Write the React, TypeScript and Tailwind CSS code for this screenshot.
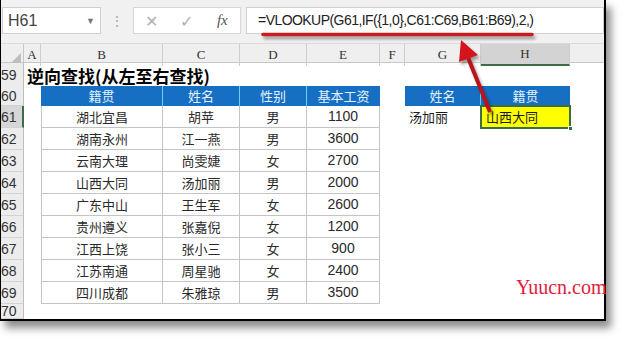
import { ReactNode } from "react";

const cjk = "font-['Noto_Sans_CJK_SC',sans-serif]";
const num = "font-['Liberation_Sans',sans-serif]";
const cols = "grid grid-cols-[23px_17px_122px_77px_67px_73px_25px_76px_89px_1fr]";

const rows = [
  ["湖北宜昌", "胡苹", "男", "1100"],
  ["湖南永州", "江一燕", "男", "3600"],
  ["云南大理", "尚雯婕", "女", "2700"],
  ["山西大同", "汤加丽", "男", "2000"],
  ["广东中山", "王生军", "女", "2600"],
  ["贵州遵义", "张嘉倪", "女", "1200"],
  ["江西上饶", "张小三", "女", "900"],
  ["江苏南通", "周星驰", "女", "2400"],
  ["四川成都", "朱雅琼", "男", "3500"],
];

function RowHead({ n, active }: { n: number; active?: boolean }) {
  return (
    <div
      className={`flex items-center ${num} text-[14px] text-[#333] leading-none border-b border-[#d2d2d2] ${
        active ? "bg-[#d6d6d6] border-r-2 border-r-[#3b6e47]" : "bg-[#ececec] border-r border-r-[#bdbdbd]"
      }`}
    >
      {n}
    </div>
  );
}

function Row({ n, h, active, children }: { n: number; h: string; active?: boolean; children?: ReactNode }) {
  return (
    <div className={`${cols} ${h}`}>
      <RowHead n={n} active={active} />
      {children}
    </div>
  );
}

function Head({ children, last }: { children: ReactNode; last?: boolean }) {
  return (
    <div
      className={`flex items-center justify-center bg-[#166fc2] text-[#e4f1ff] text-[13px] ${cjk} ${
        last ? "" : "border-r border-[#74cdf2]"
      }`}
    >
      {children}
    </div>
  );
}

function Cell({ children, first, digits }: { children: ReactNode; first?: boolean; digits?: boolean }) {
  return (
    <div
      className={`flex items-center justify-center border-r border-b border-[#c4c4c4] text-[#2a2a2a] ${
        first ? "border-l" : ""
      } ${digits ? `${num} text-[14px]` : `${cjk} text-[13px]`}`}
    >
      {children}
    </div>
  );
}

export default function App() {
  const letters = ["A", "B", "C", "D", "E", "F", "G", "H"];
  return (
    <div className="relative w-[627px] h-[342px] bg-white overflow-hidden">
      <div className="relative flex flex-col w-[606px] h-[321px] bg-white border-l border-r-2 border-b-2 border-black shadow-[5px_7px_8px_rgba(0,0,0,0.45)] overflow-hidden">
        {/* formula bar */}
        <div className="flex h-[44px] shrink-0 bg-[#f1f1f1] pt-[7px] pl-[1px] border-b border-[#dadada]">
          <div className="relative flex items-center w-[99px] h-[27px] bg-white border border-[#cfcfcf] pl-[5px]">
            <span className={`${num} text-[16px] text-[#444]`}>H61</span>
            <span className="ml-auto mr-[5px] text-[9px] text-[#777]">▼</span>
          </div>
          <div className="flex items-center justify-center w-[32px] h-[27px] text-[#aaa] text-[14px]">⋮</div>
          <div className="flex items-center w-[108px] h-[27px] bg-white border border-[#d6d6d6] text-[#b0b0b0]">
            <span className="w-[36px] text-center text-[16px]">✕</span>
            <span className="w-[36px] text-center text-[16px]">✓</span>
            <span className="w-[36px] text-center text-[15px] italic font-['Liberation_Serif',serif] text-[#555]">fx</span>
          </div>
          <div className="flex items-center flex-1 ml-[5px] h-[27px] bg-white border border-[#d0d0d0] pl-[11px]">
            <span className={`${num} text-[14px] tracking-[-0.55px] text-[#222]`}>
              =VLOOKUP(G61,IF({"{"}1,0{"}"},C61:C69,B61:B69),2,)
            </span>
          </div>
        </div>

        {/* column headers */}
        <div className={`${cols} h-[19px] shrink-0 bg-[#efefef] border-b border-[#c6c6c6]`}>
          <div className="flex items-end justify-end pr-[2px] pb-[2px] border-r border-[#c6c6c6]">
            <div className="w-0 h-0 border-l-[11px] border-l-transparent border-b-[11px] border-b-[#bdbdbd]" />
          </div>
          {letters.map((l) => (
            <div
              key={l}
              className={`flex items-center justify-center font-['Liberation_Serif',serif] text-[13px] text-[#333] border-r border-[#cdcdcd] ${
                l === "H" ? "bg-[#d3d3d3] border-b-2 border-b-[#3b6e47]" : ""
              }`}
            >
              {l}
            </div>
          ))}
          <div />
        </div>

        {/* sheet */}
        <Row n={59} h="h-[23px]">
          <div className="flex items-center pl-[3px] whitespace-nowrap">
            <span className={`${cjk} font-bold text-[17px] text-black`}>逆向查找(从左至右查找)</span>
          </div>
        </Row>
        <Row n={60} h="h-[22px]">
          <div />
          <Head>籍贯</Head>
          <Head>姓名</Head>
          <Head>性别</Head>
          <Head last>基本工资</Head>
          <div />
          <Head>姓名</Head>
          <Head last>籍贯</Head>
        </Row>
        {rows.map((r, i) => {
          const n = 61 + i;
          return (
            <Row key={n} n={n} h="h-[22px]" active={n === 61}>
              <div />
              <Cell first>{r[0]}</Cell>
              <Cell>{r[1]}</Cell>
              <Cell>{r[2]}</Cell>
              <Cell digits>{r[3]}</Cell>
              <div />
              {n === 61 ? (
                <>
                  <div className={`flex items-center pl-[4px] ${cjk} text-[13px] text-[#1a1a1a]`}>汤加丽</div>
                  <div className="relative flex items-center bg-[#ffff00] pl-[5px]">
                    <span className={`${cjk} text-[13px] text-[#1a1a1a]`}>山西大同</span>
                    <div className="absolute -inset-[1px] border-2 border-[#3b6e47]" />
                    <div className="absolute -right-[3px] -bottom-[3px] w-[5px] h-[5px] bg-[#3b6e47] border border-white" />
                  </div>
                </>
              ) : null}
            </Row>
          );
        })}
        <div className={`${cols} flex-1`}>
          <RowHead n={70} />
        </div>

        {/* annotations */}
        <svg className="absolute left-0 top-0 drop-shadow-[2px_3px_1.5px_rgba(0,0,0,0.35)]" width="606" height="321">
          <line x1="262" y1="34.5" x2="531" y2="34.5" stroke="#c81d1f" strokeWidth="3.5" strokeLinecap="round" />
          <line x1="489" y1="112" x2="466" y2="55" stroke="#b8141a" strokeWidth="4" />
          <polygon points="460,40 477,55 458,62" fill="#d4151c" />
        </svg>
      </div>

      <div className="absolute left-[516px] top-[277px] font-['Liberation_Serif',serif] text-[20px] text-[#e0203c] leading-none">
        Yuucn.com
      </div>
    </div>
  );
}
